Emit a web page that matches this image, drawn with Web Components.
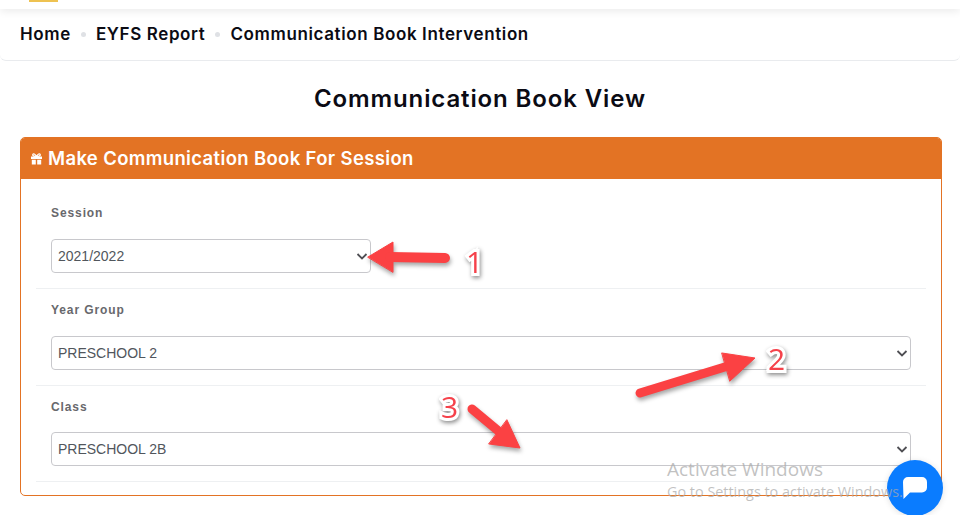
<!DOCTYPE html>
<html lang="en">
<head>
<meta charset="utf-8">
<title>Communication Book View</title>
<style>
  html, body { margin: 0; height: 515px; overflow: hidden; background: #fff; }
  body { position: relative; font-family: "Liberation Sans", Arial, sans-serif; color: #495057; }
</style>
</head>
<body>
<top-bar></top-bar>
<bread-crumbs>
  <span>Home</span>
  <span>EYFS Report</span>
  <span>Communication Book Intervention</span>
</bread-crumbs>
<page-title>Communication Book View</page-title>
<session-card heading="Make Communication Book For Session">
  <form-row label="Session" value="2021/2022" width="320px" top="27"></form-row>
  <form-row label="Year Group" value="PRESCHOOL 2"></form-row>
  <form-row label="Class" value="PRESCHOOL 2B" gap="18"></form-row>
</session-card>
<arrow-notes></arrow-notes>
<chat-button></chat-button>
<activate-note></activate-note>

<script>
class TopBar extends HTMLElement {
    constructor() {
        super();
        this.attachShadow({ mode: 'open' });
        this.shadowRoot.innerHTML = `
            <style>
              :host { display: block; height: 9px; background: #fff; box-shadow: 0 2px 8px rgba(0,0,0,.09); position: relative; }
              .logo { display: block; width: 29px; height: 2px; margin-left: 29px; background: #eec251; }
            </style>
            <div class="logo"></div>
        `;
    }
}

class BreadCrumbs extends HTMLElement {
    constructor() {
        super();
        this.attachShadow({ mode: 'open' });
        this.shadowRoot.innerHTML = `
            <style>
              :host { display: block; height: 52px; box-sizing: border-box; padding: 0 20px; border-bottom: 1px solid #e9ebee; border-radius: 0 0 6px 6px; }
              nav { display: flex; align-items: center; height: 50px; font: 600 17px Inter, sans-serif; letter-spacing: .62px; color: #0b0b14; }
              ::slotted(span) { display: flex; align-items: center; }
            </style>
            <nav><slot></slot></nav>
        `;
    }
    connectedCallback() {
        const crumbs = [...this.children];
        crumbs.slice(1).forEach(c => {
            const dot = document.createElement('i');
            dot.style.cssText = 'display:block;width:5px;height:5px;border-radius:50%;background:#dfe1e5;margin:1px 10px 0';
            c.prepend(dot);
        });
    }
}

class PageTitle extends HTMLElement {
    constructor() {
        super();
        this.attachShadow({ mode: 'open' });
        this.shadowRoot.innerHTML = `
            <style>
              :host { display: block; height: 76px; box-sizing: border-box; padding-top: 23px; text-align: center; font: 600 24px/30px Inter, sans-serif; letter-spacing: .88px; color: #0b0b14; }
            </style>
            <slot></slot>
        `;
    }
}

class SessionCard extends HTMLElement {
    constructor() {
        super();
        this.attachShadow({ mode: 'open' });
    }
    connectedCallback() {
        this.shadowRoot.innerHTML = `
            <style>
              :host { display: block; width: 922px; height: 359px; box-sizing: border-box; margin-left: 20px; border: 1px solid #e37324; border-radius: 5px; overflow: hidden; }
              header { display: flex; align-items: center; gap: 5px; height: 41px; padding: 0 0 2px 9px; box-sizing: border-box; background: #e37324; color: #fff; font: 600 18.5px Inter, sans-serif; letter-spacing: .35px; }
              svg { width: 13px; height: 12px; margin-top: 3px; }
              main { padding: 0 15px; }
            </style>
            <header>
              <svg viewBox="0 0 13 12" fill="#fff"><path d="M1 3.500h11v2.400H1zM1.800 6.700h4V11.500h-4zM7.200 6.700h4V11.500h-4z"/><path d="M6.500 3.300C5 .8 3.300.4 2.800 1.400 2.300 2.500 3.800 3.500 6.500 3.500 9.200 3.500 10.700 2.500 10.200 1.400 9.700.4 8 .8 6.500 3.300z" fill="none" stroke="#fff" stroke-width="1.200"/></svg>
              <span>${this.getAttribute('heading')}</span>
            </header>
            <main><slot></slot></main>
        `;
    }
}

class FormRow extends HTMLElement {
    constructor() {
        super();
        this.attachShadow({ mode: 'open' });
    }
    connectedCallback() {
        const width = this.getAttribute('width') || '100%';
        const top = this.getAttribute('top') || 14;
        const gap = this.getAttribute('gap') || 19;
        this.shadowRoot.innerHTML = `
            <style>
              :host { display: block; box-sizing: border-box; padding: ${top}px 15px 15px; border-bottom: 1px solid #eef0f2; }
              label { display: block; height: 14px; margin-bottom: ${gap}px; font: 700 12px/14px "Liberation Sans", Arial, sans-serif; letter-spacing: .9px; color: #68686c; }
              .select { box-sizing: border-box; position: relative; width: ${width}; height: 34px; padding: 0 6px; display: flex; align-items: center; border: 1px solid #c8c8cc; border-radius: 4px; font: 14px "Liberation Sans", Arial, sans-serif; color: #51565c; }
              svg { position: absolute; right: 2px; top: 12px; width: 12px; height: 9px; }
            </style>
            <label>${this.getAttribute('label')}</label>
            <div class="select" role="combobox">
              <span>${this.getAttribute('value')}</span>
              <svg viewBox="0 0 12 9"><path d="M1.500 2l4.500 4.500L10.500 2" fill="none" stroke="#4f4f54" stroke-width="1.800"/></svg>
            </div>
        `;
    }
}

// hand drawn annotations that sit over the page
class ArrowNotes extends HTMLElement {
    constructor() {
        super();
        this.attachShadow({ mode: 'open' });
        this.shadowRoot.innerHTML = `
            <style>
              :host { display: block; position: absolute; inset: 0; pointer-events: none; }
              svg { position: absolute; left: 0; top: 0; width: 960px; height: 515px; filter: drop-shadow(1px 3px 2px rgba(0,0,0,.35)); }
              b { position: absolute; font: 400 30px/32px "Open Sans", sans-serif; color: #f5414a;
                  -webkit-text-stroke: 6px #fff; paint-order: stroke fill; filter: drop-shadow(1px 2px 2px rgba(0,0,0,.45)); }
            </style>
            <svg viewBox="0 0 960 515">
              <g fill="#fb4143" stroke="#fb4143" stroke-linecap="round" stroke-linejoin="round">
                <path d="M368 257L393 242V272Z" stroke-width="1"/>
                <path d="M390 257L445 258" stroke-width="10" fill="none"/>
                <path d="M640 393L728 366" stroke-width="9" fill="none"/>
                <path d="M722 353L755 358L730 381Z" stroke-width="1"/>
                <path d="M472 409L502 434" stroke-width="9" fill="none"/>
                <path d="M507 420L520 448L489 444Z" stroke-width="1"/>
              </g>
            </svg>
            <b style="left:466px;top:246px">1</b>
            <b style="left:768px;top:343px">2</b>
            <b style="left:441px;top:391px">3</b>
        `;
    }
}

class ActivateNote extends HTMLElement {
    constructor() {
        super();
        this.attachShadow({ mode: 'open' });
        this.shadowRoot.innerHTML = `
            <style>
              :host { display: block; position: absolute; left: 667px; top: 458px; color: rgba(170,170,170,.72); font-family: "Open Sans", sans-serif; white-space: nowrap; }
              div { font-size: 19px; line-height: 23px; }
              small { display: block; font-size: 14.400px; line-height: 21px; }
            </style>
            <div>Activate Windows</div>
            <small>Go to Settings to activate Windows.</small>
        `;
    }
}

class ChatButton extends HTMLElement {
    constructor() {
        super();
        this.attachShadow({ mode: 'open' });
        this.shadowRoot.innerHTML = `
            <style>
              :host { display: flex; align-items: center; justify-content: center; position: absolute; left: 887px; top: 460px; width: 56px; height: 56px; border-radius: 50%; background: #0a7cff; box-shadow: 0 1px 6px rgba(0,0,0,.12); }
              svg { width: 26px; height: 24px; margin-top: 2px; }
            </style>
            <svg viewBox="0 0 26 24"><path d="M6 0h14a5 5 0 0 1 5 5v5.500a5 5 0 0 1-5 5H8L1.500 22 1 5a5 5 0 0 1 5-5z" fill="#fff"/></svg>
        `;
    }
}

customElements.define('top-bar', TopBar);
customElements.define('bread-crumbs', BreadCrumbs);
customElements.define('page-title', PageTitle);
customElements.define('session-card', SessionCard);
customElements.define('form-row', FormRow);
customElements.define('arrow-notes', ArrowNotes);
customElements.define('activate-note', ActivateNote);
customElements.define('chat-button', ChatButton);
</script>
</body>
</html>
